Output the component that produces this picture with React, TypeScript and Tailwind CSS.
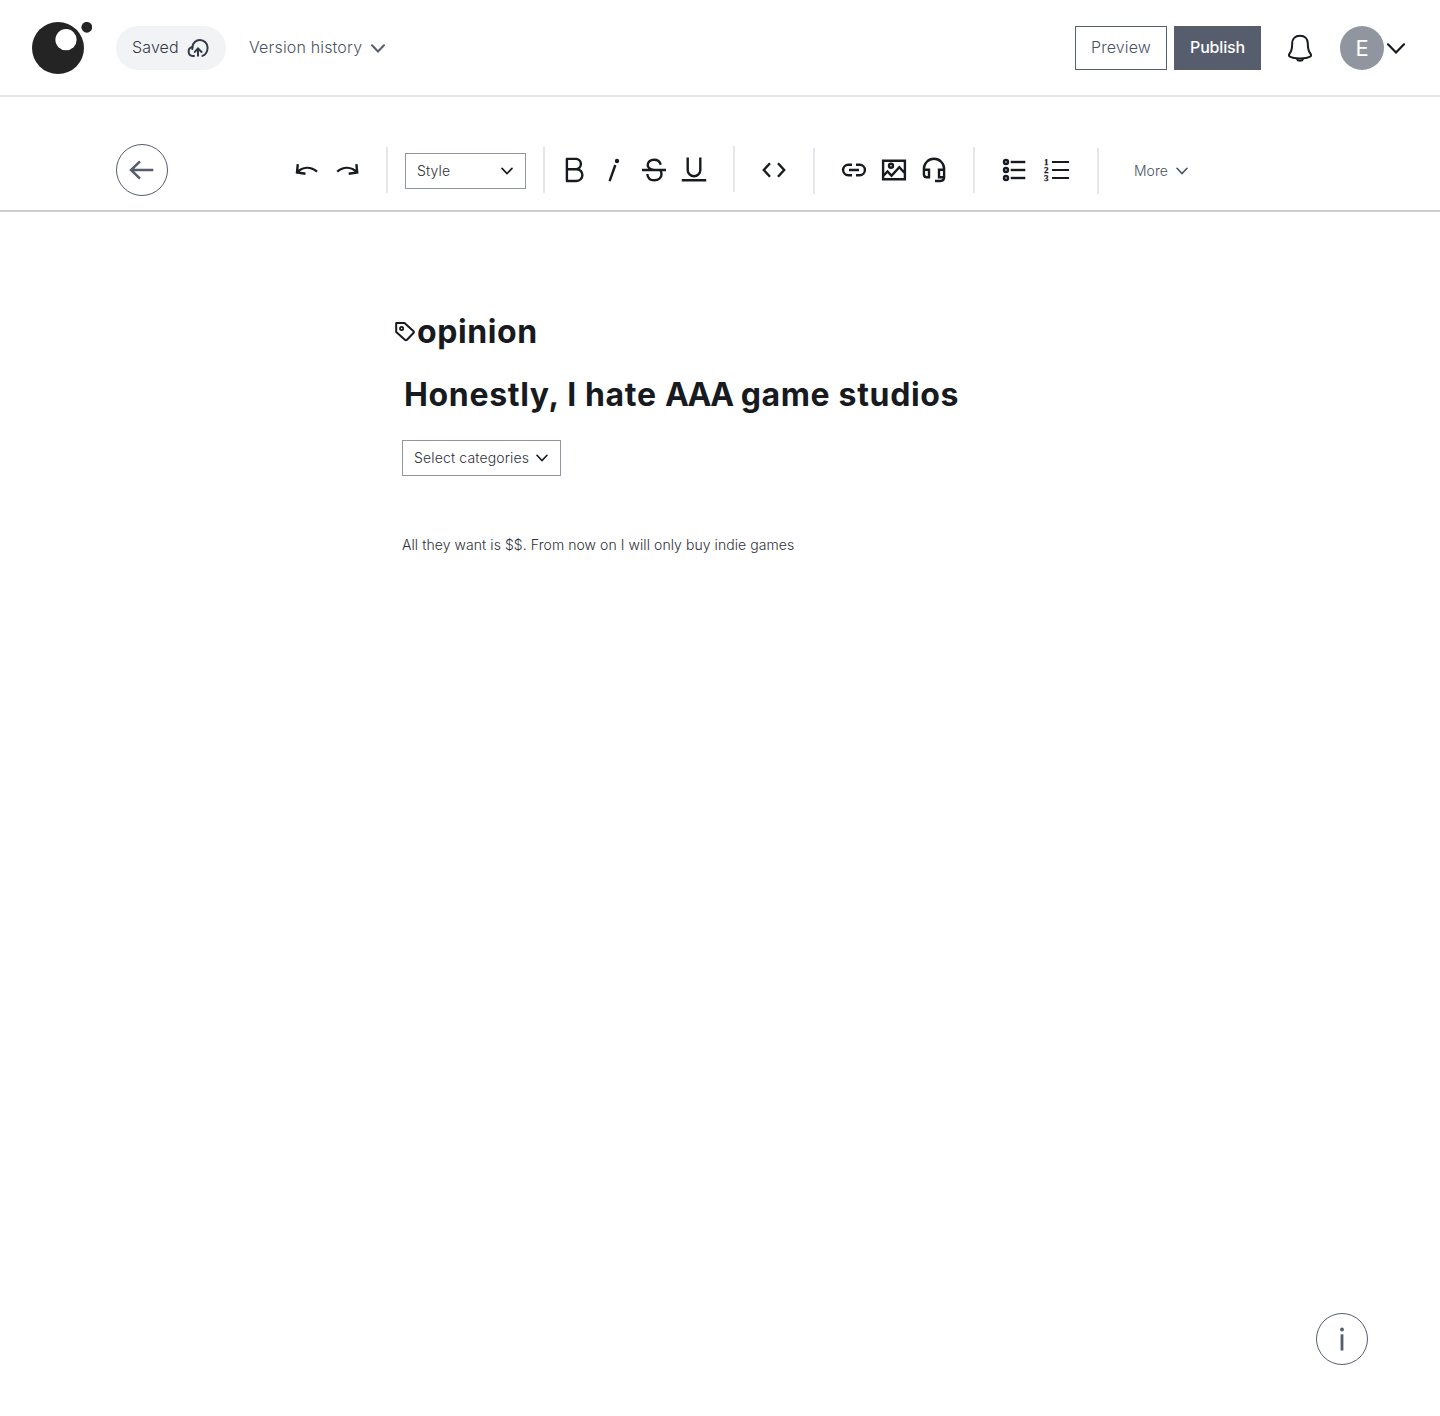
import type { ReactNode } from "react";

function Icon({ children, className = "" }: { children: ReactNode; className?: string }) {
  return (
    <svg
      width="40"
      height="40"
      viewBox="0 0 40 40"
      fill="none"
      stroke="currentColor"
      strokeWidth="2.4"
      className={`shrink-0 ${className}`}
    >
      {children}
    </svg>
  );
}

function Chevron({ w, h, stroke }: { w: number; h: number; stroke: number }) {
  return (
    <svg width={w} height={h} viewBox={`0 0 ${w} ${h}`} fill="none" stroke="currentColor" strokeWidth={stroke} className="shrink-0">
      <path d={`M1 1.3 L${w / 2} ${h - 1.5} L${w - 1} 1.3`} strokeLinecap="round" />
    </svg>
  );
}

function Divider({ className = "" }: { className?: string }) {
  return <div className={`h-[46px] w-0.5 shrink-0 bg-[#e5e6eb] ${className}`} />;
}

function Header() {
  return (
    <header className="flex h-[97px] items-center border-b-2 border-[#e5e6eb] pr-[35px] pl-8">
      <svg width="60" height="52" viewBox="0 0 60 52" className="shrink-0">
        <circle cx="26" cy="26" r="26" fill="#242424" />
        <circle cx="34" cy="17.7" r="10.6" fill="#fff" />
        <circle cx="54.8" cy="5.3" r="5.4" fill="#242424" />
      </svg>
      <div className="ml-6 flex h-11 w-[110px] items-center rounded-full bg-[#f2f3f5] pl-4 text-[#323a47]">
        <span className="w-[54px] pb-0.5 text-base font-light tracking-[0.12px]">Saved</span>
        <svg width="24" height="24" viewBox="0 0 24 24" fill="none" stroke="#323a47" strokeWidth="2" strokeLinecap="round">
          <path d="M8 20.100H6.800a4.600 4.600 0 0 1-.4-9.100A7.500 7.500 0 0 1 14 3.900a7.700 7.700 0 0 1 7.600 7.700c0 4.700-2.700 7.600-5.200 8.300" />
          <path d="M6.500 11a5 5 0 0 0-.1 2" />
          <path d="M12 19.800v-7.300M8.800 15.900l3.200-3.400 3.600 3.400" />
        </svg>
      </div>
      <div className="ml-[23px] flex items-center text-[#4b5463]">
        <span className="w-[122px] pb-0.5 text-base font-light tracking-[0.16px] whitespace-nowrap">Version history</span>
        <span className="pt-px text-[#565f6e]">
          <Chevron w={14} h={9} stroke={2} />
        </span>
      </div>
      <div className="ml-auto flex items-center">
        <button className="h-11 w-[92px] border border-[#565f6e] pb-0.5 text-base font-light tracking-[0.12px] text-[#4b5463]">Preview</button>
        <button className="ml-[7px] h-11 w-[87px] bg-[#565d6d] pb-0.5 text-base font-medium tracking-[-0.18px] text-white">Publish</button>
        <Icon className="-mt-0.5 ml-[19px] text-[#171a1f]">
          <g strokeWidth="2" strokeLinejoin="round">
            <path d="M20 8.800c-5 0-7.800 3-7.800 7.500 0 5-.2 7.600-2.500 10.200-1.100 1.300-1 2.400.3 3.200 2.400 1.400 6.200 1.700 10 1.700s7.600-.3 10-1.700c1.300-.8 1.400-1.900.3-3.200-2.300-2.600-2.500-5.200-2.500-10.200 0-4.500-2.800-7.500-7.800-7.500z" />
            <path d="M16.800 32c.6 1.200 1.700 1.700 3.200 1.700s2.600-.5 3.200-1.700" />
          </g>
        </Icon>
        <div className="ml-5 flex h-11 w-11 items-center justify-center rounded-full bg-[#9095a0] pt-0.5 text-[22px] text-white">E</div>
        <div className="ml-[3px] pt-px text-[#171a1f]">
          <Chevron w={18} h={11} stroke={2.2} />
        </div>
      </div>
    </header>
  );
}

function Toolbar() {
  return (
    <div className="flex h-[115px] items-center border-b-2 border-[#cbced8] pt-[33px] pl-[116px] text-[#171a1f]">
      <button className="flex h-[52px] w-[52px] shrink-0 items-center justify-center rounded-full border border-[#565d6d] text-[#565d6d]">
        <Icon>
          <path d="M31.300 20H8.800M18 11.300 9 20l9 8.700" strokeWidth="2.500" />
        </Icon>
      </button>
      <Icon className="ml-[119px]">
        <path d="m10.800 14.200-.8 8.300 8.500 1.300M10 22.300c6-5.600 13.500-6 20-.7" />
      </Icon>
      <Icon className="ml-px">
        <path d="m28.400 14.200.8 8.300-8.500 1.300M29.200 22.300c-6-5.600-13.500-6-20-.7" />
      </Icon>
      <Divider className="ml-[18px]" />
      <button className="mt-0.5 ml-[17px] flex h-9 w-[121px] shrink-0 items-center justify-between border border-[#9095a0] pr-3 pl-[11px] text-sm font-light tracking-[0.14px] text-[#2e3138]">
        Style
        <span className="text-[#171a1f]">
          <Chevron w={12} h={8} stroke={1.7} />
        </span>
      </button>
      <Divider className="ml-[17px]" />
      <Icon className="ml-[9px]">
        <path d="M12.900 8.900h9.500a5.200 5.200 0 0 1 0 10.300h-9.500h9.600a5.900 5.900 0 0 1 0 11.800h-9.600z" strokeLinejoin="round" />
      </Icon>
      <Icon>
        <circle cx="23" cy="11" r="2.200" fill="currentColor" stroke="none" />
        <path d="M21.300 15 15.600 31.200" />
      </Icon>
      <Icon>
        <path d="M8 20h24M26.700 14.800c-.8-3.300-3.500-5-6.700-5-3.700 0-6.300 2.100-6.300 5.200 0 3 2.600 4.400 6.300 5M13.300 24c.4 4 3 6.300 6.900 6.300 4.300 0 7.300-2.300 7.300-6 0-1.300-.3-2.600-1-3.800" />
      </Icon>
      <Icon>
        <path d="M13.700 7.500V20a6.300 6.300 0 0 0 12.600 0V7.500M7.800 30.200h24.400" />
      </Icon>
      <Divider className="-mt-0.5 ml-[19px]" />
      <Icon className="ml-[19px]">
        <path d="M16 13.300 9.800 20l6.200 6.700M24 13.300l6.200 6.700-6.200 6.700" />
      </Icon>
      <Divider className="mt-0.5 ml-[19px]" />
      <Icon className="ml-[19px]">
        <path d="M18 14.800h-3.700a5.200 5.200 0 0 0 0 10.400H18M22 14.800h3.700a5.200 5.200 0 0 1 0 10.400H22M15 20h10" />
      </Icon>
      <Icon>
        <path d="M9.100 10.800h21.800v18.500H9.100zM9.300 25.800l4.200-4.300 4 4.200 7.800-8.500 5.600 6" />
        <circle cx="17" cy="15.800" r="2" />
      </Icon>
      <Icon>
        <path d="M9.900 20v-1.200a10.100 10 0 0 1 20.200 0V27c0 2.500-1.200 4-3.700 4H21M15 19.800v7.400h-2.200c-2 0-2.900-1.200-2.900-3v-4.400zM25 19.800v7.400h5.100v-7.400z" />
      </Icon>
      <Divider className="ml-[19px]" />
      <Icon className="ml-[19px]">
        {[12, 20, 28].map((y) => (
          <g key={y}>
            <circle cx="12" cy={y} r="2" />
            <path d={`M16.700 ${y}H31.300`} />
          </g>
        ))}
      </Icon>
      <Icon className="ml-1">
        {[12, 20, 28].map((y, i) => (
          <g key={y}>
            <text x="6" y={y + 2.9} fontSize="9" fontWeight="700" fontFamily="Liberation Serif, serif" fill="currentColor" stroke="currentColor" strokeWidth="0.25">
              {i + 1}
            </text>
            <path d={`M14 ${y}H31`} strokeWidth="2" />
          </g>
        ))}
      </Icon>
      <Divider className="mt-0.5 ml-[19px]" />
      <div className="mt-0.5 ml-[35px] flex items-center text-sm font-light text-[#4b5463]">
        <span className="w-[42px]">More</span>
        <Chevron w={12} h={8} stroke={1.6} />
      </div>
    </div>
  );
}

function Article() {
  return (
    <main className="flex flex-1 flex-col items-start pt-[98px] pl-[394px] text-[#171a1f]">
      <h2 className="flex h-11 items-center text-[32px] leading-[44px] font-bold tracking-[0.6px]">
        <svg width="22" height="22" viewBox="0 0 22 22" fill="none" stroke="currentColor" strokeWidth="2" strokeLinejoin="round" className="mr-px shrink-0">
          <path d="M2.200 2h8.300l8.800 7.900c.8.700.8 1.400.1 2.100l-6.400 6.700c-.7.700-1.400.7-2.100 0L2.200 10.900z" />
          <circle cx="7.600" cy="7.500" r="1.600" strokeWidth="1.800" />
        </svg>
        opinion
      </h2>
      <h1 className="mt-[19px] ml-2.5 text-[32px] leading-[44px] font-bold tracking-[0.66px] whitespace-nowrap">
        Honestly, I hate <span className="tracking-[-1.7px]">AAA</span> game studios
      </h1>
      <button className="mt-[23px] ml-2 flex h-9 w-[159px] items-center justify-between border border-[#9095a0] pr-3 pl-[11px] text-sm font-light tracking-[0.15px] whitespace-nowrap text-[#2e3138]">
        Select categories
        <span className="text-[#171a1f]">
          <Chevron w={12} h={8} stroke={1.6} />
        </span>
      </button>
      <p className="mt-[58px] ml-2 text-sm leading-[22px] font-light tracking-[0.07px] text-[#2e3138]">
        All they want is $$. From now on I will only buy indie games
      </p>
      <button className="mt-auto mr-[72px] mb-[51px] flex h-[52px] w-[52px] items-center justify-center self-end rounded-full border border-[#565d6d] text-[#565d6d]">
        <svg width="8" height="26" viewBox="0 0 8 26" fill="currentColor">
          <circle cx="4" cy="3.500" r="1.900" />
          <path d="M2.600 8.300h2.800v16.200H2.600z" />
        </svg>
      </button>
    </main>
  );
}

export default function App() {
  return (
    <div className="flex h-[1416px] w-[1440px] flex-col bg-white font-[Inter,sans-serif]">
      <Header />
      <Toolbar />
      <Article />
    </div>
  );
}
